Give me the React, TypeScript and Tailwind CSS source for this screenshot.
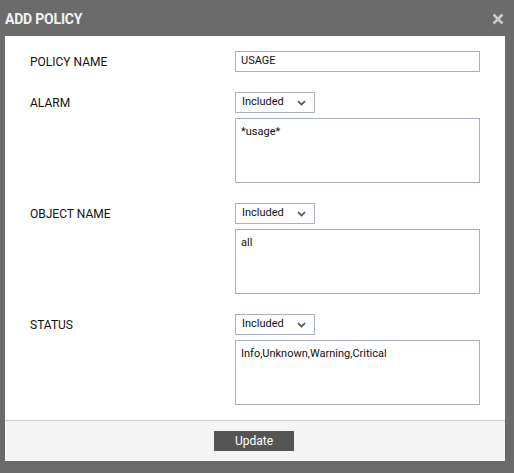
import { ReactNode } from 'react'

const font = { fontFamily: 'Roboto, "Liberation Sans", sans-serif' }

function Chevron() {
  return (
    <svg width="9" height="6" viewBox="0 0 9 6" className="text-[#555]">
      <path d="M1 1.2 L4.5 4.6 L8 1.2" fill="none" stroke="currentColor" strokeWidth="1.8" />
    </svg>
  )
}

function Select() {
  return (
    <div className="flex h-[21px] w-[80px] items-center justify-between border border-[#aab0bd] bg-white pl-[6px] pr-[8px] text-[11px] text-[#111]">
      <span>Included</span>
      <Chevron />
    </div>
  )
}

function Row({ label, children }: { label: string; children: ReactNode }) {
  return (
    <div className="flex">
      <div className="flex h-[21px] w-[205px] shrink-0 items-center text-[12px] text-[#111]">{label}</div>
      <div className="w-[245px]">{children}</div>
    </div>
  )
}

function Group({ label, value }: { label: string; value: string }) {
  return (
    <Row label={label}>
      <Select />
      <div className="mt-[5px] h-[65px] border border-[#aab0bd] px-[5px] pt-[6px] text-[11px] leading-[14px] text-[#111]">
        {value}
      </div>
    </Row>
  )
}

export default function App() {
  return (
    <div className="h-[473px] w-[514px] bg-[#6b6b6b] pl-[5px] pr-[9px]" style={font}>
      <div className="flex h-[36px] items-center justify-between pr-[1px] pt-[2px]">
        <span className="text-[14px] font-bold tracking-[-0.2px] text-[#f2f2f2]">ADD POLICY</span>
        <svg width="12" height="12" viewBox="0 0 12 12" className="text-[#c9c9c9]">
          <path d="M1.5 1.5 L10.5 10.5 M10.5 1.5 L1.5 10.5" stroke="currentColor" strokeWidth="2.6" />
        </svg>
      </div>
      <div className="bg-white">
        <div className="flex flex-col gap-[20px] pb-[15px] pl-[25px] pt-[15px]">
          <Row label="POLICY NAME">
            <div className="flex h-[21px] items-center border border-[#aab0bd] px-[5px] text-[11px] text-[#111]">
              USAGE
            </div>
          </Row>
          <Group label="ALARM" value="*usage*" />
          <Group label="OBJECT NAME" value="all" />
          <Group label="STATUS" value="Info,Unknown,Warning,Critical" />
        </div>
        <div className="flex h-[41px] items-center justify-center border-t border-[#c8c8c8] bg-[#f5f5f5]">
          <button className="mr-[2px] h-[20px] w-[80px] bg-[#555] text-[12px] text-white">Update</button>
        </div>
      </div>
    </div>
  )
}
